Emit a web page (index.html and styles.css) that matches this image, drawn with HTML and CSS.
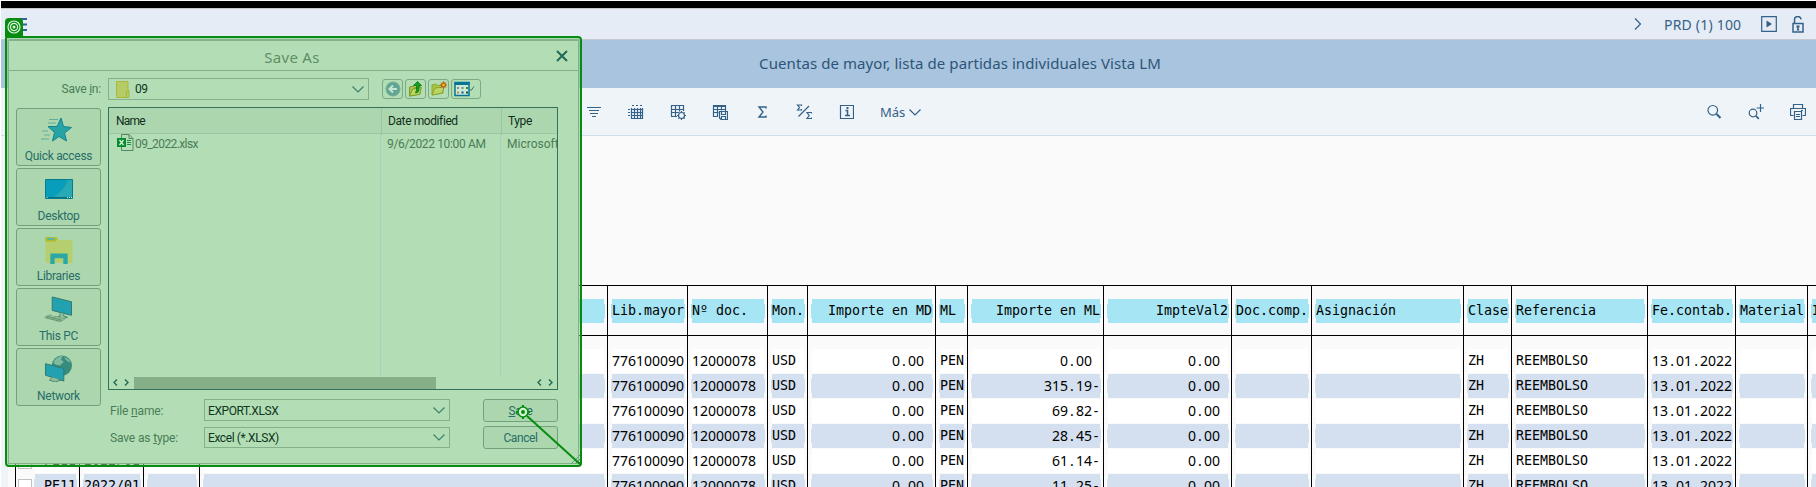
FILE: index.html
```html
<!DOCTYPE html>
<html lang="es">
<head>
<meta charset="utf-8">
<title>Cuentas de mayor</title>
<link rel="stylesheet" href="styles.css">
</head>
<body>
<div class="page">
  <div class="topline"></div>
  <header class="shell">
    <svg class="menu" width="16" height="16" viewBox="0 0 16 16"><path d="M0 2h16M0 7.500h16M0 13h16" stroke="#2f6596" stroke-width="2"/></svg>
    <div class="shell-right">
      <svg width="8" height="14" viewBox="0 0 8 14" class="ln"><path d="M1 1.500l5.500 5.500L1 12.500"/></svg>
      <span class="system">PRD (1) 100</span>
      <svg class="play ln" width="16" height="16" viewBox="0 0 16 16"><path d="M.7.700h14.600v14.600H.7z"/><path d="M5.500 4.500v7l5.500-3.500z" fill="#346187" stroke="none"/></svg>
      <svg class="lock ln" width="12" height="17" viewBox="0 0 12 17"><path d="M1 7.500h10v8.500H1zM2.500 7.500V4a3.200 3.200 0 0 1 6.500-.5" stroke-width="1.500"/><path d="M4.500 9.500h3v2l-1 .5 1 2.500h-3l1-2.500-1-.5z" fill="#346187" stroke="none"/></svg>
    </div>
  </header>
  <div class="title"><h1>Cuentas de mayor, lista de partidas individuales Vista LM</h1></div>
  <nav class="toolbar">
    <svg class="ln" width="16" height="16" viewBox="0 0 16 16"><path d="M1 3.500h14M3 6.500h10M4 9.500h8M6 12.500h4"/></svg>
    <svg class="ln" width="16" height="16" viewBox="0 0 16 16"><path d="M3.500 4v10.500h11V4M3.500 5.500h11M3.500 8.500h11M3.500 11.500h11M6.500 4v10.500M9.500 4v10.500M12.500 4v10.500M4 1.500h2M8 1.500h2M12 1.500h2M0 5.500h2M0 8.500h2M0 11.500h2"/></svg>
    <svg class="ln" width="16" height="16" viewBox="0 0 16 16"><path d="M7 12.500H1.500v-11h12V7M1.500 5.500h12M1.500 8.500h7M5.500 1.500v11M9.500 1.500v6"/><circle cx="11.500" cy="11.500" r="3"/><path d="M11.500 7v2M11.500 14v2M7 11.500h2M14 11.500h2M8.400 8.400l1 1M13.600 13.600l1 1M14.600 8.400l-1 1M8.400 14.600l1-1"/></svg>
    <svg class="ln" width="16" height="16" viewBox="0 0 16 16"><path d="M6 12.500H1.500v-11h12V7M1.500 2.500h12M1.500 5.500h12M1.500 8.500h5M5.500 1.500v11M9.500 1.500v5M7.500 7.500h8v8H9l-1.500-1.500zM9.500 7.500v3h4v-3M9.500 15.500v-3h4v3"/></svg>
    <svg class="ln" width="16" height="16" viewBox="0 0 16 16"><path d="M12 4.500V3H5l4 5-4 5h7v-1.500" stroke-width="1.400"/></svg>
    <svg class="ln" width="16" height="16" viewBox="0 0 16 16"><path d="M5.500 2V1H1.500l2 2.500-2 2.500h4V5M15.500 9.500v-1h-4.500l2.200 3-2.200 3h4.500v-1M13 2L2.500 12.500"/></svg>
    <svg class="ln" width="16" height="16" viewBox="0 0 16 16"><path d="M2.500 1.500h13v13h-13z"/><path d="M7.500 6.500H9.500v5M7 11.500h5" stroke-width="1.500"/><path d="M9.500 3v2" stroke-width="2"/></svg>
    <span class="more">Más<svg class="ln" width="12" height="7" viewBox="0 0 12 7"><path d="M.5.500L6 6 11.500.5"/></svg></span>
    <div class="toolbar-right">
      <svg class="ln" width="16" height="16" viewBox="0 0 16 16"><circle cx="6.800" cy="6.300" r="4.800"/><path d="M10.500 10l4 4" stroke-width="2"/></svg>
      <svg class="ln" width="16" height="16" viewBox="0 0 16 16"><circle cx="5" cy="9" r="3.800"/><path d="M7.800 11.800l3 3" stroke-width="1.800"/><path d="M12.500 0v8M8.500 4h7.500"/></svg>
      <svg class="ln" width="16" height="16" viewBox="0 0 16 16"><path d="M3.500 4.500v-4h9v4M3.500 11.500H.5v-7h15v7h-3M4.500 7.500h7v8h-7zM6 10.500h4M6 12.500h4M11 6.500h2" stroke-width="1.200"/></svg>
    </div>
  </nav>
  <main class="report"><div class="grid" id="grid"></div></main>
</div>

<section class="dialog">
  <div class="frame">
    <div class="dlg-title"><span class="dlg-name">Save As</span>
      <svg class="close" width="12" height="12" viewBox="0 0 12 12"><path d="M1 1l10 10M11 1L1 11" stroke="#1f6a58" stroke-width="2"/></svg></div>
    <div class="save-in">
      <label>Save <u>i</u>n:</label>
      <div class="combo folder-combo">
        <svg width="14" height="17" viewBox="0 0 14 17"><path d="M.5.500h11.500v9h1v7H.5z" fill="#b5cc66" stroke="#a9b83c"/><path d="M10.500 16v-5.500h2" fill="none" stroke="#a9b83c"/></svg>
        <span>09</span>
        <svg class="chev" width="12" height="7" viewBox="0 0 12 7"><path d="M.5.500L6 6 11.500.5"/></svg>
      </div>
      <div class="tools">
        <span class="tool"><svg width="16" height="16" viewBox="0 0 16 16"><circle cx="8" cy="8" r="7" fill="#61a695" stroke="#74ad92"/><path d="M12 8H5M8 4.500L4.500 8 8 11.500" fill="none" stroke="#c5e5cf" stroke-width="2"/></svg></span>
        <span class="tool"><svg width="16" height="16" viewBox="0 0 16 16"><path d="M1.500 15V6l4-1 1 1.500L12 5v8z" fill="#a8c444" stroke="#7d9d25"/><path d="M1.500 15l3-7 9-1.500-2 7z" fill="#bcd665" stroke="#7d9d25"/><path d="M5.500 4.500L9.500.5l4 4h-2.500V9q-.5 3-3.500 3 1.500-2 1-7.500z" fill="#17a01d" stroke="#087614" stroke-width=".8"/></svg></span>
        <span class="tool"><svg width="16" height="16" viewBox="0 0 16 16"><path d="M1 14V4l4-1 1.500 1.500L12 4v8z" fill="#a8c444" stroke="#8da62d"/><path d="M1 14l3-7 9-1-2 6z" fill="#bcd665" stroke="#8da62d"/><circle cx="12.500" cy="4" r="2" fill="#e3c32c" stroke="#bb6417" stroke-width="1.300"/><path d="M12.500 0v1.500M12.500 6.500V8M9 4h1M15 4h1M10 1.500l1 1M15 6.500l-1-1M15 1.500l-1 1M10 6.500l1-1" stroke="#bb6417"/></svg></span>
        <span class="tool wide"><svg width="24" height="16" viewBox="0 0 24 16"><path d="M1 1.500h14v13H1z" fill="#cce9d6" stroke="#087493" stroke-width="1.500"/><path d="M.5 1h15v3H.5z" fill="#087493"/><path d="M3 6h2v2H3z" fill="#8a8d70"/><path d="M7.500 6h2v2h-2z" fill="#718ba0"/><path d="M12 6h2v2h-2z" fill="#36892f"/><path d="M3 10.500h2v2H3z" fill="#b0913b"/><path d="M7.500 10.500h2v2h-2z" fill="#075594"/><path d="M12 10.500h2v2h-2z" fill="#174f4d"/><path d="M15.500 8l1.500 1.500L20 5.500" fill="none" stroke="#35765f"/></svg></span>
      </div>
    </div>
    <div class="middle">
      <aside class="places">
        <div class="place"><svg width="32" height="26" viewBox="0 0 32 26"><path d="M20 1l2.500 8.500 8 1-7 5.500 2 8-7.500-4.500-6.500 4.500 2-8.500-6.500-6h9z" fill="#27a3a6" stroke="#128391"/><path d="M8 2.500h9M7 6h8M1 14h6M3 18h6M0 22h8" stroke="#64ad9b"/></svg><span>Quick access</span></div>
        <div class="place"><svg width="28" height="20" viewBox="0 0 28 20"><path d="M.5.500h27v19H.5z" fill="#089ebb" stroke="#067d8c"/><path d="M27 1v17H9Q20 10 23 1z" fill="#29a8b5"/><path d="M1 18.500h26" stroke="#056e80"/><path d="M1.500 18.500h1M22 18.500h1M24 18.500h1M26 18.500h1" stroke="#cceee0"/></svg><span>Desktop</span></div>
        <div class="place"><svg width="28" height="28" viewBox="0 0 28 28"><path d="M0 27V0h10l3 3h15v24z" fill="#b5cf6e"/><path d="M0 5V0h11l2 2-3 3z" fill="#b0bd34"/><path d="M2 2h7" stroke="#55b7a5" stroke-width="2"/><path d="M5 28V17h18v11h-4.500v-6h-9v6z" fill="#29a8a6"/></svg><span>Libraries</span></div>
        <div class="place"><svg width="32" height="28" viewBox="0 0 32 28"><path d="M10 1l20 5v14l-20-5z" fill="#22a2b0" stroke="#31786c"/><path d="M18 18v3l-4 1 6 2 6-2-4-1v-2" fill="#8fbd9e" stroke="#4d8871"/><path d="M6 19l18 5-7 3L1 22z" fill="#8fbc95"/><path d="M4 21l17 4.500M2.500 22.500l17 4M9 19.500L4 23M14 21l-5 3.500M19 22.500L14 26" stroke="#5e926b" stroke-width=".8"/></svg><span>This PC</span></div>
        <div class="place"><svg width="30" height="28" viewBox="0 0 30 28"><circle cx="18" cy="11" r="10.500" fill="#378c7e"/><path d="M9 8q3-7 10-7l-2 4 3 2-4 4-4-1zM20 2q5 1 7 6l-4-2z" fill="#7fbb9d"/><path d="M1 9l19 5v13L1 21z" fill="#22a2b0" stroke="#31786c"/><path d="M8 23l-3 3 6 2 6-2-3-1" fill="#8fbd9e" stroke="#4d8871"/></svg><span>Network</span></div>
      </aside>
      <div class="content">
        <div class="list">
          <div class="list-head"><span class="c-name">Name</span><span class="c-date">Date modified</span><span class="c-type">Type</span></div>
          <div class="list-body">
            <div class="c-name file"><svg width="17" height="17" viewBox="0 0 17 17"><path d="M4.500.500H12l4 4v12H4.500zM12 .5v4h4" fill="none" stroke="#568762"/><path d="M0 4h9v9H0z" fill="#078a32"/><path d="M2.500 6l4 5M6.500 6l-4 5" stroke="#d5f0d8" stroke-width="1.300"/><path d="M10 6.500h4M10 8.500h4M10 10.500h4" stroke="#188f45"/></svg><span>09_2022.xlsx</span></div>
            <div class="c-date date">9/6/2022 10:00 AM</div>
            <div class="c-type">Microsoft</div>
          </div>
          <div class="scroll">
            <svg width="16" height="7" viewBox="0 0 16 7"><path d="M4 .5l-3 3 3 3M12 .5l3 3-3 3"/></svg>
            <div class="thumb"></div>
            <svg width="16" height="7" viewBox="0 0 16 7"><path d="M4 .5l-3 3 3 3M12 .5l3 3-3 3"/></svg>
          </div>
        </div>
        <div class="fields">
          <label>File <u>n</u>ame:</label>
          <div class="combo"><span>EXPORT.XLSX</span><svg class="chev" width="12" height="7" viewBox="0 0 12 7"><path d="M.5.500L6 6 11.500.5"/></svg></div>
          <button><u>S</u>ave</button>
          <label>Save as <u>t</u>ype:</label>
          <div class="combo type"><span>Excel (*.XLSX)</span><svg class="chev" width="12" height="7" viewBox="0 0 12 7"><path d="M.5.500L6 6 11.500.5"/></svg></div>
          <button>Cancel</button>
        </div>
      </div>
    </div>
  </div>
</section>
<div class="badge"><svg width="14" height="14" viewBox="0 0 14 14"><g fill="none" stroke="#d9f3da" stroke-width="1.200"><circle cx="7" cy="7" r="6"/><circle cx="7" cy="7" r="3.600"/></g><circle cx="7" cy="7" r="1.500" fill="#d9f3da"/></svg></div>
<svg class="pointer" width="72" height="68" viewBox="0 0 72 68"><path d="M62 62l5-5M65 62l2-2M58 62l9-9" stroke="#5c9a78" fill="none"/><path d="M14 14L68 63" stroke="#078c10" stroke-width="2"/><circle cx="10" cy="10" r="5" fill="#d3efd6" stroke="#078c10" stroke-width="1.600"/><circle cx="10" cy="10" r="2" fill="#078c10"/><path d="M10 3v2M10 15v2M3 10h2M15 10h2" stroke="#078c10" stroke-width="2"/></svg>
<script src="grid.js"></script>
</body>
</html>
```
FILE: styles.css
```css
* { box-sizing: border-box; }
body { margin: 0; width: 1816px; height: 487px; overflow: hidden; position: relative; background: #fff; font-family: "Noto Sans", sans-serif; color: #346187; }
svg { display: block; flex: none; }
.ln { fill: none; stroke: #346187; stroke-width: 1.2; }
.page { height: 487px; margin-left: 1px; padding-top: 1px; display: flex; flex-direction: column; }
.topline { height: 7px; background: #000; flex: none; }
.shell { height: 32px; flex: none; background: #e5ecf6; border-top: 1px solid #c8c8c8; border-bottom: 1px solid #c5cad0; display: flex; align-items: center; justify-content: space-between; padding-left: 10px; }
.menu { margin-top: 2px; }
.shell-right { display: flex; align-items: center; padding-right: 12px; }
.system { font-size: 14px; letter-spacing: .2px; margin: 0 18px 0 22px; width: 79px; white-space: nowrap; }
.lock { margin-left: 15px; }
.title { height: 48px; flex: none; background: #a9c4de; display: flex; align-items: center; justify-content: center; padding: 0 0 2px 103px; }
.title h1 { margin: 0; font-size: 15px; letter-spacing: .08px; font-weight: 400; color: #2d5478; white-space: nowrap; }
.toolbar { height: 48px; flex: none; background: #eff4f9; border-bottom: 1px solid #d0deea; display: flex; align-items: center; gap: 26px; padding: 1px 10px 0 585px; }
.more { display: flex; align-items: center; gap: 4px; font-size: 13px; }
.toolbar-right { margin-left: auto; display: flex; gap: 26px; }
.report { flex: 1; border-left: 7px solid #eff4f9; background: #fafafa; padding: 149px 0 0 7px; overflow: hidden; }

.grid { display: flex; width: 1801px; height: 202px; overflow: hidden; color: #000; font: 13.3px/24px "DejaVu Sans Mono", monospace; }
.col { flex: none; border-left: 1px solid #000; padding-left: 4px; padding-right: 3px; white-space: pre; }
.col.first { padding-left: 0; }
.hd { height: 51px; margin: 0 -3px 13px -4px; padding: 13px 3px 0 4px; border-top: 1px solid #000; border-bottom: 1px solid #000; }
.first .hd { margin-left: 0; }
.cell { height: 24px; margin-bottom: 1px; background: #fff; position: relative; }
.col .cell:nth-child(odd) { background: #d4dfef; }
.hd .cell, .col .hd .cell:nth-child(n) { background: #a5e5f4; }
.cell::before { content: ""; position: absolute; left: -1px; right: -1px; top: 5px; height: 14px; background: inherit; z-index: 0; }
.cell span { position: relative; }
.right { text-align: right; }
.num .cell { font-family: "Noto Sans", sans-serif; font-size: 14px; line-height: 23px; }
.num .hd .cell { font: 13.3px/24px "DejaVu Sans Mono", monospace; }
.pt { display: inline-block; width: 8px; text-align: center; }
.first .row { display: flex; margin-bottom: 1px; height: 24px; gap: 3px; padding-left: 2px; }
.first .row .cell { flex: 1; padding-left: 9px; margin: 0; }
.first .row:nth-child(even) .cell { background: #fff; }
.first .row:nth-child(odd) .cell { background: #d4dfef; }
.check { width: 14px; height: 15px; margin-top: 5px; border: 1px solid #c0c0c0; background: #fff; }

.dialog { position: absolute; left: 5px; top: 36px; width: 577px; height: 431px; border: 2px solid #078c10; border-radius: 2px 4px 4px 4px; background: rgba(131, 200, 135, .6); padding: 1px; font: 12px/16px Roboto, sans-serif; letter-spacing: -.4px; color: #4a7c57; }
.frame { height: 425px; border: 1px solid #84b288; border-top-width: 2px; background: #b3deb5; border-radius: 2px 2px 0 0; }
.dlg-title { height: 30px; border-bottom: 1px solid #84b288; display: flex; align-items: center; justify-content: center; position: relative; }
.dlg-name { font: 15px "Noto Sans", sans-serif; letter-spacing: .3px; color: #5f8e67; padding-top: 3px; padding-right: 3px; }
.close { position: absolute; right: 10px; top: 9px; }
.save-in { display: flex; height: 36px; padding-top: 7px; }
.save-in > label { width: 99px; text-align: right; padding: 3px 7px 0 0; letter-spacing: -.2px; }
.combo { border: 1px solid #84b288; display: flex; align-items: center; color: #0d3520; padding: 0 4px 0 3px; height: 22px; }
.folder-combo { width: 261px; padding-left: 7px; gap: 5px; }
.chev { margin-left: auto; fill: none; stroke: #3f7f69; stroke-width: 1.2; }
.tools { display: flex; gap: 2px; margin: 1px 0 0 13px; height: 20px; }
.tool { width: 21px; height: 20px; border: 1px solid #7caa84; border-radius: 3px; padding: 1px 2px; }
.tool.wide { width: 30px; }
.middle { display: flex; }
.places { width: 92px; padding: 1px 0 0 7px; display: flex; flex-direction: column; gap: 2px; flex: none; }
.place { height: 58px; border: 1px solid #739f7c; border-radius: 3px; background: #acd7ae; color: #286d68; display: flex; flex-direction: column; align-items: center; justify-content: space-between; padding: 8px 0 1px; letter-spacing: -.3px; }
.place svg { max-height: 27px; }
.place:first-child svg { margin-right: 3px; }
.place:nth-child(2) svg { margin-top: 2px; }
.place:nth-child(4) svg { margin: -1px 2px 0 0; }
.place:nth-child(5) svg { margin: -2px 0 0; }
.content { margin-left: 7px; }
.list { width: 450px; height: 283px; border: 1px solid #35705a; display: flex; flex-direction: column; overflow: hidden; }
.list-head, .list-body { display: grid; grid-template-columns: 272px 120px 1fr; }
.list-head { height: 26px; background: #acd7ae; border-bottom: 1px solid #9dc7a0; color: #102e1b; line-height: 27px; }
.list-head span { padding-left: 7px; }
.list-head .c-name { letter-spacing: -.8px; }
.list-head .c-date, .list-head .c-type { border-left: 1px solid #9cc4a0; padding-left: 6px; }
.list-body { flex: 1; line-height: 20px; overflow: hidden; }
.list-body > div { padding-left: 7px; white-space: nowrap; border-left: 1px solid #a5d1b8; margin-left: -1px; }
.list-body .file { display: flex; gap: 1px; height: 21px; margin: 0; padding-left: 8px; border: 0; letter-spacing: -.6px; }
.list-body .date { letter-spacing: -.35px; padding-left: 6px; }
.list-body .c-type { letter-spacing: 0; padding-left: 6px; }
.scroll { height: 13px; display: flex; align-items: center; justify-content: space-between; padding: 0 4px; }
.scroll svg { fill: none; stroke: #286d58; stroke-width: 1.5; }
.thumb { width: 302px; height: 12px; background: #86af88; margin-left: 5px; margin-right: auto; }
.fields { display: grid; grid-template-columns: 96px 246px 33px 75px; row-gap: 4px; padding-top: 9px; }
.fields label { padding: 4px 0 0 2px; letter-spacing: -.15px; }
.fields button { grid-column: 4; width: 75px; height: 23px; border: 1px solid #739f7c; border-radius: 3px; background: #acd7ae; font: inherit; letter-spacing: -.4px; color: #286d68; padding: 0; }
.fields .combo { padding-top: 1px; }
.fields .combo.type { height: 21px; margin-top: 1px; padding-top: 0; }
.badge { position: absolute; left: 5px; top: 18px; width: 18px; height: 19px; padding: 2px; background: #078c10; border-radius: 4px 4px 0 0; }
.pointer { position: absolute; left: 513px; top: 402px; }
```
FILE: grid.js
```javascript
const same = (v, n = 6) => Array(n).fill(v);
const tail = (v) => ['', '', '', '', v, v];
// [left x, header, values, alignment, numeric]
const columns = [
  [79, '', tail('2022/01')],
  [143, '', same('')],
  [199, '', same('')],
  [607, 'Lib.mayor', same('776100090'), '', true],
  [687, 'Nº doc.', same('12000078'), '', true],
  [767, 'Mon.', same('USD')],
  [807, 'Importe en MD', same('0.00 '), 'right', true],
  [935, 'ML', same('PEN')],
  [967, 'Importe en ML', ['0.00 ', '315.19-', '69.82-', '28.45-', '61.14-', '11.25-'], 'right', true],
  [1103, 'ImpteVal2', same('0.00 '), 'right', true],
  [1231, 'Doc.comp.', same('')],
  [1311, 'Asignación', same('')],
  [1463, 'Clase', same('ZH')],
  [1511, 'Referencia', same('REEMBOLSO')],
  [1647, 'Fe.contab.', same('13.01.2022'), '', true],
  [1735, 'Material', same('')],
  [1807, 'I', same('')],
  [1887]
];
const cell = (t) => `<div class="cell"><span>${t}</span></div>`;
// punctuation keeps the full character width so digits stay on the grid
const fixed = (t) => t.replace(/[.\- ]/g, (c) => `<span class="pt">${c}</span>`);
let html = `<div class="col first" style="width:64px"><div class="hd">${cell('')}</div>` +
  tail('PE11').map((t) => `<div class="row"><i class="check"></i>${cell(t)}</div>`).join('') + '</div>';
for (let i = 0; i < columns.length - 1; i++) {
  const [x, head, values, align = '', num] = columns[i];
  html += `<div class="col ${align} ${num ? 'num' : ''}" style="width:${columns[i + 1][0] - x}px">` +
    `<div class="hd">${cell(head)}</div>` +
    values.map((v) => cell(num ? fixed(v) : v)).join('') + '</div>';
}
document.getElementById('grid').innerHTML = html;
```
